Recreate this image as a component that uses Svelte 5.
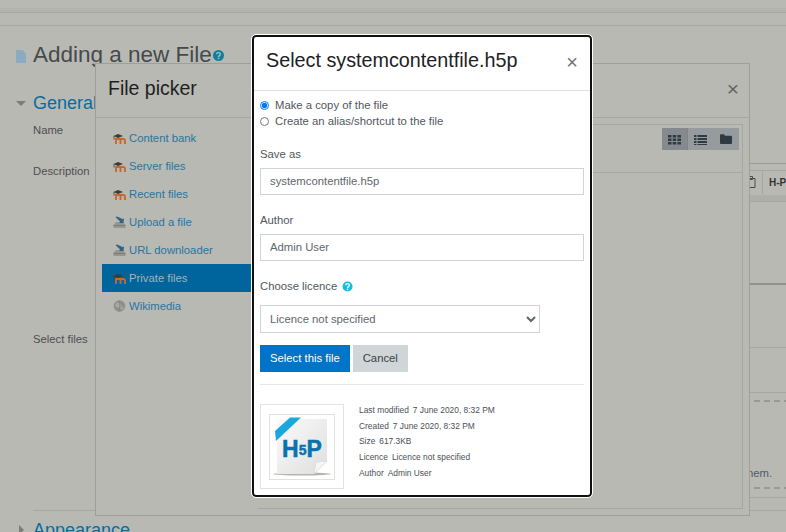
<script>
  const repos = [
    { name: 'Content bank', icon: 'm' },
    { name: 'Server files', icon: 'm' },
    { name: 'Recent files', icon: 'm' },
    { name: 'Upload a file', icon: 'u' },
    { name: 'URL downloader', icon: 'u' },
    { name: 'Private files', icon: 'm', active: true },
    { name: 'Wikimedia', icon: 'w' }
  ];
  const meta = [
    ['Last modified', '7 June 2020, 8:32 PM'],
    ['Created', '7 June 2020, 8:32 PM'],
    ['Size', '617.3KB'],
    ['Licence', 'Licence not specified'],
    ['Author', 'Admin User']
  ];
</script>

<div class="page">
  <div class="topbar"></div>
  <div class="subbar"></div>
  <div class="titlerow">
    <svg class="docicon" viewBox="0 0 10 13" width="10" height="13"><path d="M0 0h6.500l3.500 3.500V13H0z" fill="#8aabc1"/></svg>
    <h1>Adding a new File</h1>
    <svg class="help" viewBox="0 0 12 12" width="11" height="11"><circle cx="6" cy="6" r="6" fill="#0f7f9c"/><path d="M4 4.600c0-2.400 4-2.400 4 0 0 1.500-2 1.500-2 3" fill="none" stroke="#b9b9b4" stroke-width="1.500"/><rect x="5.200" y="8.400" width="1.600" height="1.600" fill="#b9b9b4"/></svg>
  </div>
  <div class="section">
    <span class="tri down"></span><h2>General</h2>
  </div>
  <div class="lab name">Name</div>
  <div class="lab desc">Description</div>
  <div class="lab files">Select files</div>
  <div class="rule"></div>
  <div class="section appearance">
    <span class="tri right"></span><h2>Appearance</h2>
  </div>

  <div class="behind">
    <div class="ed-top"></div>
    <div class="ed-tools">
      <svg viewBox="0 0 10 12" width="10" height="12"><path d="M1 2.500h8v9H1z M3.500 .5h3v3h-3z" fill="none" stroke="#4a4a48" stroke-width="1"/></svg>
      <span class="ed-sep"></span>
      <span class="ed-h5p">H-P</span>
    </div>
    <div class="ed-gap"></div>
    <div class="ed-line l1"></div>
    <div class="ed-line l2"></div>
    <div class="ed-line l3"></div>
    <div class="dash d1"></div>
    <span class="hem">hem.</span>
    <div class="dash d2"></div>
    <div class="ed-line l4"></div>
  </div>

  <section class="picker">
    <header class="picker-head">
      <h3>File picker</h3>
      <span class="picker-x">×</span>
    </header>
    <div class="picker-body">
      <nav class="repos">
        {#each repos as r}
          <div class="repo" class:active={r.active}>
            {#if r.icon === 'm'}
              <svg viewBox="0 0 13 12" width="13" height="12"><path d="M3 12V7h7a2 2 0 0 1 2 2v3M7.500 7v5" fill="none" stroke="#c4692b" stroke-width="1.900"/><path d="M0.500 4 5 2 10 4 5 6z" fill="#3b3b39"/><path d="M1 4v3.500" stroke="#3b3b39" stroke-width=".8"/></svg>
            {:else if r.icon === 'u'}
              <svg viewBox="0 0 13 12" width="13" height="12"><path d="M.5 12V9l2.500-3h7l2.500 3v3z" fill="#96968f"/><path d="M.5 9h12v.8H.5z" fill="#77776f"/><path d="M2.500 1 4 .5 9.500 3 11 2.500 10.500 7H6L7.200 5.700z" fill="#2f6482"/></svg>
            {:else}
              <svg viewBox="0 0 13 12" width="13" height="12"><circle cx="6.500" cy="6" r="5.800" fill="#8e8e8a"/><circle cx="5" cy="5" r="2.600" fill="#a8a8a4"/><circle cx="9" cy="8" r="1.700" fill="#a5a5a1"/><path d="M6.500 .5v11" stroke="#7d7d79" stroke-width=".5"/></svg>
            {/if}
            <span>{r.name}</span>
          </div>
        {/each}
      </nav>
      <div class="browser">
        <div class="browser-bar">
          <div class="views">
            <span class="view on"><svg viewBox="0 0 13 11" width="13" height="11"><path d="M0 1h3.500v2.400H0zM4.700 1h3.500v2.400H4.700zM9.400 1H13v2.400H9.400zM0 4.500h3.500v2.400H0zM4.700 4.500h3.500v2.400H4.700zM9.400 4.500H13v2.400H9.400zM0 8h3.500v2.400H0zM4.700 8h3.500v2.400H4.700zM9.400 8H13v2.400H9.400z" fill="#2f3a42"/></svg></span>
            <span class="view"><svg viewBox="0 0 13 11" width="13" height="11"><path d="M0 1h2.500v2H0zM3.500 1H13v2H3.500zM0 4h2.500v2H0zM3.500 4H13v2H3.500zM0 7h2.500v2H0zM3.500 7H13v2H3.500zM0 10h2.500v1H0zM3.500 10H13v1H3.500z" fill="#2f3a42"/></svg></span>
            <span class="view"><svg viewBox="0 0 12 10" width="12" height="10"><path d="M0 1.300A1 1 0 0 1 1 .3h3l1 1.400h6a1 1 0 0 1 1 1V9a1 1 0 0 1-1 1H1a1 1 0 0 1-1-1z" fill="#2f3a42"/></svg></span>
          </div>
        </div>
      </div>
    </div>
  </section>

  <section class="modal">
    <header class="modal-head">
      <h4>Select systemcontentfile.h5p</h4>
      <span class="modal-x">×</span>
    </header>
    <div class="modal-body">
      <label class="radio"><input type="radio" name="copy" checked /><span>Make a copy of the file</span></label>
      <label class="radio"><input type="radio" name="copy" /><span>Create an alias/shortcut to the file</span></label>

      <div class="flabel">Save as</div>
      <input class="text" type="text" value="systemcontentfile.h5p" />
      <div class="flabel">Author</div>
      <input class="text" type="text" value="Admin User" />
      <div class="flabel lic">
        Choose licence
        <svg viewBox="0 0 12 12" width="11" height="11"><circle cx="6" cy="6" r="5.500" fill="#10bfd8"/><path d="M4.100 4.700c0-2.300 3.900-2.300 3.900 0 0 1.500-2 1.400-2 2.900" fill="none" stroke="#fff" stroke-width="1.400"/><rect x="5.200" y="8.300" width="1.600" height="1.600" fill="#fff"/></svg>
      </div>
      <select class="sel"><option>Licence not specified</option></select>
      <div class="buttons">
        <button class="primary">Select this file</button>
        <button class="secondary">Cancel</button>
      </div>
      <hr />
      <div class="details">
        <div class="thumb">
          <div class="thumb-inner">
            <svg viewBox="0 0 64 64" width="64" height="64">
              <defs>
                <linearGradient id="pg" x1="0" y1="0" x2="1" y2="1"><stop offset="0" stop-color="#fbfbfb"/><stop offset="1" stop-color="#dedede"/></linearGradient>
              </defs>
              <ellipse cx="32" cy="59" rx="29" ry="1.500" fill="#b5b5b0"/>
              <path d="M7 4h50v42L44 59H7z" fill="url(#pg)"/>
              <path d="M44 59 46 47 57 46z" fill="#f5f5f5" stroke="#cfcfcf" stroke-width=".5"/>
              <path d="M5 16 20 2.500h11L6 26z" fill="#19a8dd"/>
              <text x="12" y="41.500" class="logo">H<tspan class="logo5" dy="-2">5</tspan><tspan dy="2">P</tspan></text>
            </svg>
          </div>
        </div>
        <dl class="meta">
          {#each meta as [k, v]}
            <div><dt>{k}</dt><dd>{v}</dd></div>
          {/each}
        </dl>
      </div>
    </div>
  </section>
</div>

<style>
  :global(body) {
    margin: 0;
    background: #b9b9b4;
    overflow: hidden;
  }
  .page {
    position: relative;
    width: 786px;
    height: 532px;
    overflow: hidden;
    background: #b9b9b4;
    font-family: "Liberation Sans", Arial, sans-serif;
    color: #4b4b49;
  }
  .topbar { height: 12px; border-bottom: 1px solid #a6a6a2; background: linear-gradient(#b9b9b4 0 8px, #b3b3ae 8px); }
  .subbar { height: 12px; border-bottom: 1px solid #a6a6a2; }
  .titlerow { display: flex; align-items: center; height: 30px; margin-top: 14px; padding-left: 16px; }
  .docicon { margin-right: 7px; margin-top: 3px; }
  h1 { margin: 0; font-size: 22.500px; font-weight: 400; color: #454a4c; line-height: 30px; }
  .help { margin-left: 1px; }
  .section { display: flex; align-items: center; position: absolute; left: 16px; top: 91px; }
  .section h2 { margin: 0; font-size: 18px; font-weight: 400; color: #076d9e; line-height: 24px; }
  .tri { display: block; width: 0; height: 0; margin-right: 7px; }
  .tri.down { border: 5px solid transparent; border-top: 5px solid #7c7c79; border-bottom: 0; }
  .tri.right { border: 5px solid transparent; border-left: 5px solid #7c7c79; border-right: 0; margin-right: 9px; margin-left: 3px; }
  .appearance { top: 518px; }
  .lab { position: absolute; left: 33px; font-size: 11.300px; line-height: 14px; color: #4d4f50; }
  .name { top: 123px; }
  .desc { top: 164px; }
  .files { top: 332px; }
  .rule { position: absolute; left: 33px; right: 0; top: 510px; border-top: 1px solid #a6a6a2; }

  .behind { position: absolute; left: 750px; top: 163px; width: 36px; height: 345px; }
  .ed-top { position: absolute; left: -8px; right: 0; top: 0; height: 6px; border-top: 1px solid #9a9a96; border-bottom: 1px solid #a6a6a2; }
  .ed-tools { position: absolute; left: -8px; top: 8px; right: 0; height: 23px; }
  .ed-tools svg { position: absolute; left: 4px; top: 5px; }
  .ed-sep { position: absolute; left: 20px; top: 0; height: 23px; border-left: 1px solid #a6a6a2; }
  .ed-h5p { position: absolute; left: 27px; top: 6px; font-size: 10px; font-weight: 700; color: #343432; white-space: nowrap; }
  .ed-gap { position: absolute; left: 0; right: 0; top: 32px; height: 6px; background: #afafaa; border-bottom: 1px solid #a6a6a2; }
  .ed-line { position: absolute; left: 0; right: 0; }
  .l1 { top: 120px; border-top: 2px solid #90908c; }
  .l2 { top: 184px; border-top: 1px solid #a6a6a2; }
  .l3 { top: 229px; border-top: 1px solid #a6a6a2; }
  .l4 { top: 334px; border-top: 1px solid #a6a6a2; }
  .dash { position: absolute; left: 4px; right: 0; height: 2px; background: repeating-linear-gradient(90deg, #989894 0 6px, transparent 6px 10px); }
  .d1 { top: 237px; }
  .d2 { top: 324px; }
  .hem { position: absolute; left: -3px; top: 303px; font-size: 11.300px; line-height: 14px; color: #4d5d66; }

  .picker {
    position: absolute;
    left: 95px; top: 63px;
    width: 653px; height: 451px;
    border: 1px solid #9e9e9a;
    background: #b9b9b4;
    display: flex;
    flex-direction: column;
  }
  .picker-head { height: 53px; border-bottom: 1px solid #a6a6a2; display: flex; justify-content: space-between; padding: 0 10px 0 12px; flex: none; }
  .picker h3 { margin: 11px 0 0; font-size: 19.500px; line-height: 26px; font-weight: 400; color: #1f1f1e; }
  .picker-x { font-size: 21px; line-height: 26px; margin-top: 12px; color: #646462; }
  .picker-body { flex: 1; display: flex; min-height: 0; }
  .repos { width: 156px; padding: 6px 0 0 6px; flex: none; }
  .repo { height: 28px; display: flex; align-items: center; gap: 3px; padding-left: 11px; font-size: 11.300px; color: #27759f; }
  .repo.active { background: #00659c; color: #9fb5bf; }
  .browser { flex: 1; margin: 6px 6px 6px 0; border: 1px solid #a6a6a2; border-left: 0; min-width: 0; }
  .browser-bar { height: 44px; border-bottom: 1px solid #a6a6a2; display: flex; justify-content: flex-end; padding: 3px 3px 0 0; }
  .views { display: flex; height: 22px; background: #969c9e; }
  .view { width: 25.500px; height: 22px; display: flex; align-items: center; justify-content: center; }
  .view.on { background: #848a8d; border-right: 1px solid #7f8588; box-sizing: border-box; width: 26px; }

  .modal {
    position: absolute;
    left: 252px; top: 35px;
    width: 340px; height: 462px;
    box-sizing: border-box;
    background: #fff;
    border: 2.500px solid #111;
    border-radius: 4px;
    outline: 1px solid #fff;
    color: #50575e;
  }
  .modal-head { height: 53px; border-bottom: 1px solid #dee2e6; display: flex; justify-content: space-between; padding: 0 12px; }
  .modal h4 { margin: 10px 0 0; font-size: 19.750px; line-height: 27px; font-weight: 400; color: #1d2125; white-space: nowrap; }
  .modal-x { font-size: 20px; line-height: 24px; margin-top: 13px; color: #6e7377; }
  .modal-body { padding: 6px 6px 0 6px; font-size: 11.300px; }
  .radio { display: flex; align-items: center; height: 16px; }
  .radio input { width: 9px; height: 9px; margin: 0 6px 0 0; flex: none; }
  .flabel { margin-top: 16px; height: 22.500px; line-height: 18px; }
  .flabel.lic { display: flex; align-items: center; gap: 5px; height: 18px; }
  .text {
    display: block; box-sizing: border-box; width: 324px; height: 27.500px;
    border: 1px solid #ced4da; padding: 0 9px; margin: 0;
    font: inherit; color: #5e666d; background: #fff; border-radius: 0; outline: 0;
  }
  .sel {
    display: block; box-sizing: border-box; width: 280px; height: 28px; margin-top: 10px;
    border: 1px solid #ced4da; padding: 0 5px; font: inherit; color: #5e666d; background: #fff; border-radius: 0;
  }
  .buttons { display: flex; gap: 3px; margin-top: 12px; }
  button { border: 0; height: 27px; font: inherit; padding: 0 10px 1px; border-radius: 0; }
  .primary { background: #0074c8; color: #fff; }
  .secondary { background: #d0d5d8; color: #3a4046; }
  hr { margin: 12px 0 0; border: 0; border-top: 1px solid #e4e7ea; width: 324px; }
  .details { display: flex; margin-top: 19px; }
  .thumb { width: 84px; height: 85px; box-sizing: border-box; border: 1px solid #e3e3df; display: flex; align-items: center; justify-content: center; flex: none; }
  .thumb-inner { width: 66px; height: 66px; box-sizing: border-box; border: 1px solid #e0e0dc; display: flex; align-items: center; justify-content: center; }
  .logo { font: 700 23px "Liberation Sans", Arial, sans-serif; fill: #0a73ad; stroke: #0a73ad; stroke-width: .5px; }
  .logo5 { font-size: 14px; }
  .meta { margin: -1px 0 0 15px; font-size: 8.400px; color: #495057; }
  .meta div { display: flex; gap: 4px; height: 15.700px; line-height: 15px; margin: 0; }
  .meta dt, .meta dd { margin: 0; }
</style>
